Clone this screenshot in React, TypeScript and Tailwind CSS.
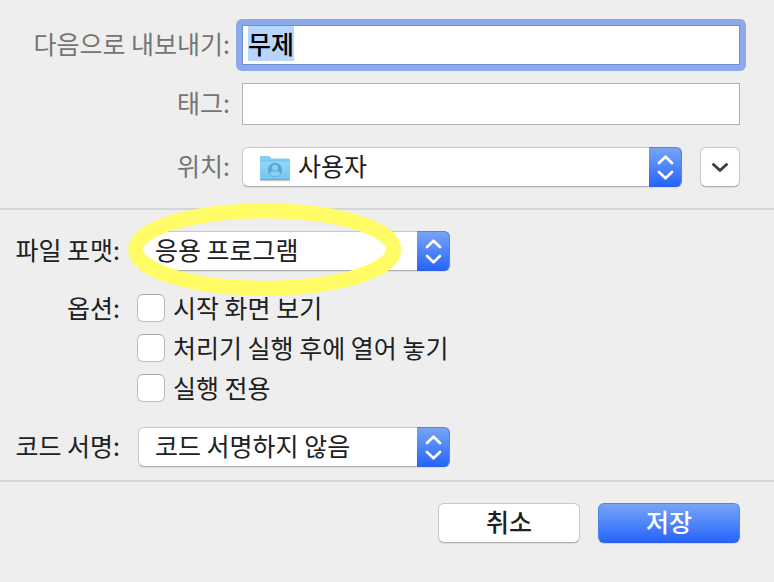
import { useEffect, useRef, useState } from 'react';
import type { ReactNode, SelectHTMLAttributes } from 'react';

const OPTIONS = ['시작 화면 보기', '처리기 실행 후에 열어 놓기', '실행 전용'];

function FolderIcon() {
  return (
    <svg viewBox="0 0 32 28" className="w-8 h-7" aria-hidden="true">
      <defs>
        <linearGradient id="folder" x1="0" y1="0" x2="0" y2="1">
          <stop offset="0" stopColor="#93d8fa" />
          <stop offset="1" stopColor="#72c4f1" />
        </linearGradient>
      </defs>
      <path d="M1.500 26.500h29" stroke="#000" strokeOpacity=".2" strokeWidth="1.500" />
      <path d="M1 3.200Q1 2 2.200 2h7.200q.8 0 1.400.6l1.400 1.400q.6.6 1.400.6h16.200q1.200 0 1.200 1.200V9H1z" fill="#83cdf2" />
      <path d="M1 7h30v17.800q0 1.200-1.200 1.200H2.200Q1 26 1 24.800z" fill="url(#folder)" />
      <path d="M1 7h30" stroke="#6fbde6" strokeOpacity=".7" />
      <path d="M1 25.500h30" stroke="#5aaede" />
      <circle cx="16" cy="16" r="7.200" fill="#56a9da" />
      <circle cx="16" cy="13.700" r="3" fill="#86cff5" />
      <path d="M10.600 19.700q1.200-2.400 3.400-2.700 2 1.200 4 0 2.200.3 3.400 2.700a6.600 6.600 0 0 1-10.800 0z" fill="#86cff5" />
    </svg>
  );
}

interface PopupSelectProps extends SelectHTMLAttributes<HTMLSelectElement> {
  icon?: ReactNode;
  children: ReactNode;
}

function PopupSelect({ icon, children, ...props }: PopupSelectProps) {
  return (
    <div className="relative flex-1 flex items-center h-10">
      <select
        {...props}
        className={`appearance-none w-full h-10 pb-1 pr-10 rounded-md border border-[#c8c8c8] border-b-[#b0b0b0] bg-white text-[#202020] shadow-[0_1px_1px_rgba(0,0,0,0.08)] outline-none ${icon ? 'pl-[55px]' : 'pl-4'}`}
      >
        {children}
      </select>
      {icon && <span className="absolute left-[17px] top-[7px] pointer-events-none">{icon}</span>}
      <span className="absolute right-0 top-0 h-10 w-[33px] rounded-r-md border border-l-0 border-[#4f86ea] border-b-[#2a5fe8] bg-linear-to-b from-[#77a3f5] to-[#2763fa] flex items-center justify-center pointer-events-none">
        <svg viewBox="0 0 18 26" className="w-[18px] h-[26px]" fill="none" stroke="#fff" strokeWidth="2.6" strokeLinecap="round" strokeLinejoin="round">
          <path d="M3 9 9.500 2.700 16 9M3 18l6.500 6.300L16 18" />
        </svg>
      </span>
    </div>
  );
}

export default function App() {
  const [name, setName] = useState('무제');
  const nameRef = useRef<HTMLInputElement>(null);

  useEffect(() => {
    nameRef.current?.focus();
    nameRef.current?.select();
  }, []);

  return (
    <form
      onSubmit={(e) => e.preventDefault()}
      className="min-h-screen bg-[#eeeeee] text-[25px] leading-8 text-[#202020] font-['Noto_Sans_CJK_KR',sans-serif]"
    >
      {/* Destination */}
      <section className="pt-[25px] pb-[21px] pr-[34px] border-b-2 border-[#d6d6d6] text-[#757575]">
        <div className="flex items-center gap-3">
          <label htmlFor="name" className="w-[230px] pb-1 text-right">다음으로 내보내기:</label>
          {/* Focus ring around the field */}
          <div className="flex-1 flex min-w-0 p-[6px] -m-[6px] rounded-md bg-[#8da9ea]">
            <input
              id="name"
              ref={nameRef}
              type="text"
              value={name}
              onChange={(e) => setName(e.target.value)}
              className="flex-1 min-w-0 h-10 px-[5px] pb-1 bg-white border border-[#6f8cd6] text-black font-medium outline-none selection:bg-[#b8d6fd] selection:text-black"
            />
          </div>
        </div>
        <div className="flex items-center gap-3 mt-[18px]">
          <label htmlFor="tags" className="w-[230px] pb-1 text-right">태그:</label>
          <input id="tags" type="text" className="flex-1 min-w-0 h-[42px] px-[5px] bg-white border border-[#b2b2b2] text-black outline-none" />
        </div>
        <div className="flex items-center gap-3 mt-[22px]">
          <label htmlFor="location" className="w-[230px] pb-1 text-right">위치:</label>
          <div className="flex-1 flex gap-[18px]">
            <PopupSelect id="location" icon={<FolderIcon />}>
              <option>사용자</option>
            </PopupSelect>
            <button
              type="button"
              aria-label="펼치기"
              className="w-10 h-10 rounded-md border border-[#c8c8c8] border-b-[#b0b0b0] bg-white shadow-[0_1px_1px_rgba(0,0,0,0.08)] flex items-center justify-center"
            >
              <svg viewBox="0 0 18 12" className="w-[18px] h-3" fill="none" stroke="#404040" strokeWidth="3" strokeLinecap="round" strokeLinejoin="round">
                <path d="M2.500 3.500 9 9.500l6.500-6" />
              </svg>
            </button>
          </div>
        </div>
      </section>

      {/* Format and options */}
      <section className="pt-[21px] pb-[13px] border-b-2 border-[#d6d6d6]">
        <div className="flex items-center gap-[18px]">
          <label htmlFor="format" className="w-[120px] pb-1 text-right">파일 포맷:</label>
          <div className="relative w-[312px]">
            <PopupSelect id="format">
              <option>응용 프로그램</option>
            </PopupSelect>
            <svg viewBox="0 0 274 94" className="absolute -left-[10px] -top-7 w-[274px] h-[94px] max-w-none pointer-events-none" fill="none" aria-hidden="true">
              <ellipse cx="136.700" cy="46.500" rx="129" ry="38.700" stroke="#fffc66" strokeWidth="15" />
            </svg>
          </div>
        </div>
        <fieldset className="flex gap-[17px] mt-[17px]" aria-labelledby="options-label">
          <div id="options-label" className="w-[120px] h-10 pt-[3px] text-right">옵션:</div>
          <div>
            {OPTIONS.map((option) => (
              <label key={option} className="flex items-center gap-2 h-10">
                <input
                  type="checkbox"
                  className="appearance-none size-7 rounded-md border border-[#bcbcbc] border-t-[#a8a8a8] bg-white checked:bg-[#2763fa]"
                />
                <span className="pb-[2px]">{option}</span>
              </label>
            ))}
          </div>
        </fieldset>
        <div className="flex items-center gap-[18px] mt-[19px]">
          <label htmlFor="signing" className="w-[120px] pb-1 text-right">코드 서명:</label>
          <div className="w-[312px]">
            <PopupSelect id="signing">
              <option>코드 서명하지 않음</option>
            </PopupSelect>
          </div>
        </div>
      </section>

      <footer className="flex justify-end gap-[18px] pt-[21px] pr-[34px]">
        <button type="button" className="w-[142px] h-10 pb-1 rounded-md border border-[#c8c8c8] border-b-[#b0b0b0] bg-white font-medium shadow-[0_1px_1px_rgba(0,0,0,0.08)]">
          취소
        </button>
        <button type="submit" className="w-[142px] h-10 pb-1 rounded-md border border-[#4f86ea] border-b-[#2a5fe8] bg-linear-to-b from-[#77a3f5] to-[#2763fa] text-white font-medium shadow-[0_1px_1px_rgba(0,0,0,0.1)]">
          저장
        </button>
      </footer>
    </form>
  );
}
